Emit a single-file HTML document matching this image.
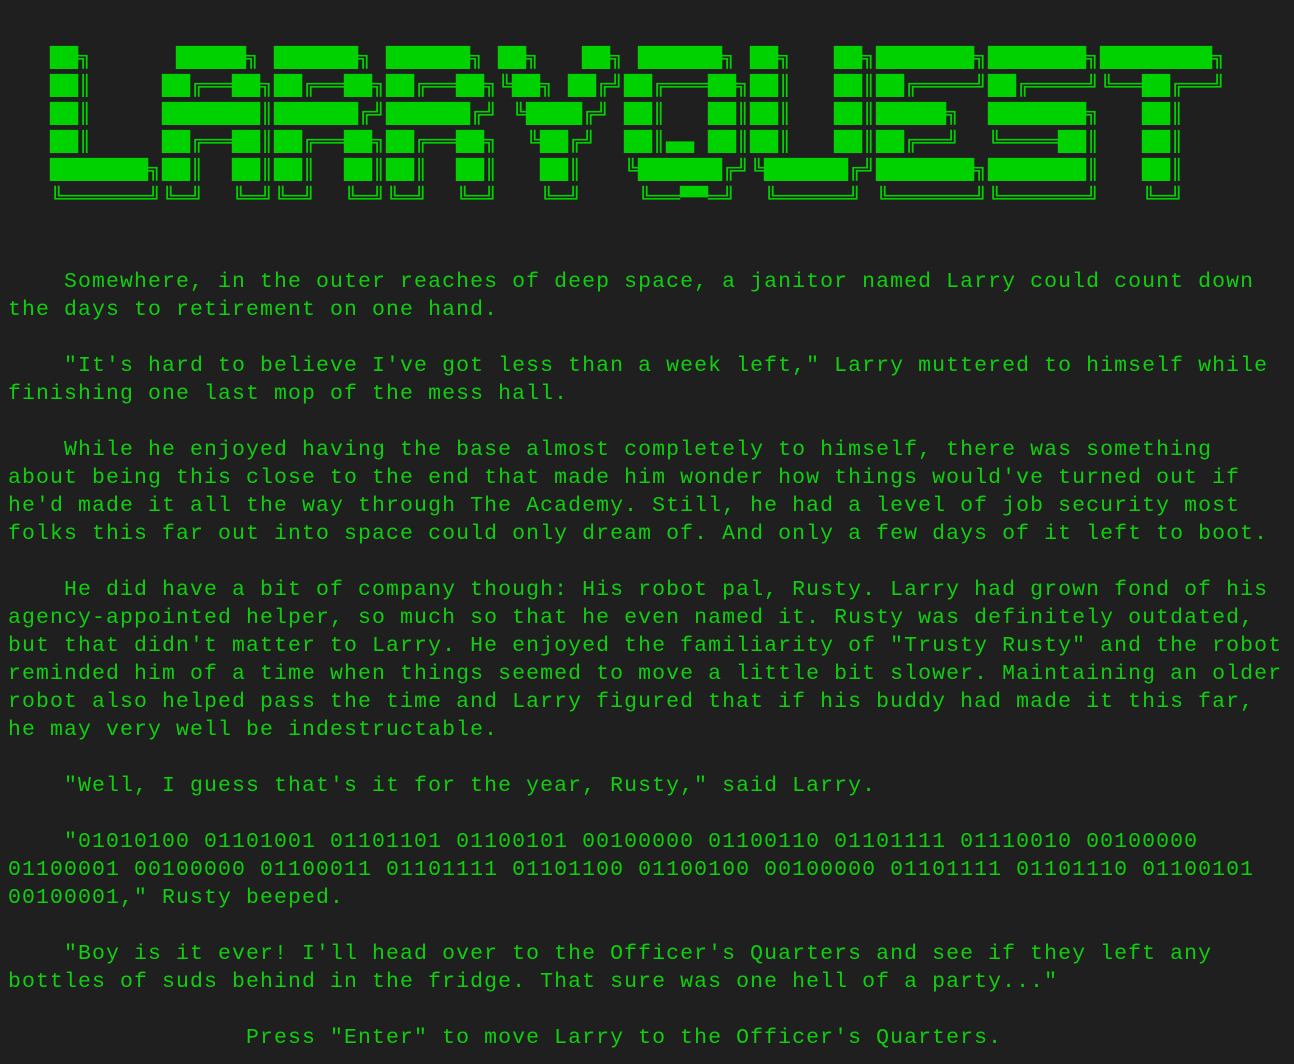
<!DOCTYPE html>
<html><head><meta charset="utf-8"><style>
html,body{margin:0;padding:0;background:#1f1f1f;width:1294px;height:1064px;overflow:hidden}
pre{margin:0;position:absolute;left:8px;white-space:pre;color:#0fcf0f}
#art{top:44px;font-family:"DejaVu Sans Mono",monospace;font-size:19.5px;letter-spacing:0px;line-height:28px;color:#00d200;transform:scaleX(1.1925);transform-origin:0 0}
#txt{top:268px;font-family:"Liberation Mono",monospace;font-size:21.5px;letter-spacing:1.1px;line-height:28px}
</style></head><body>
<pre id="art">   ██╗      █████╗ ██████╗ ██████╗ ██╗   ██╗ ██████╗ ██╗   ██╗███████╗███████╗████████╗
   ██║     ██╔══██╗██╔══██╗██╔══██╗╚██╗ ██╔╝██╔═══██╗██║   ██║██╔════╝██╔════╝╚══██╔══╝
   ██║     ███████║██████╔╝██████╔╝ ╚████╔╝ ██║   ██║██║   ██║█████╗  ███████╗   ██║   
   ██║     ██╔══██║██╔══██╗██╔══██╗  ╚██╔╝  ██║▄▄ ██║██║   ██║██╔══╝  ╚════██║   ██║   
   ███████╗██║  ██║██║  ██║██║  ██║   ██║   ╚██████╔╝╚██████╔╝███████╗███████║   ██║   
   ╚══════╝╚═╝  ╚═╝╚═╝  ╚═╝╚═╝  ╚═╝   ╚═╝    ╚══▀▀═╝  ╚═════╝ ╚══════╝╚══════╝   ╚═╝   </pre>
<pre id="txt">    Somewhere, in the outer reaches of deep space, a janitor named Larry could count down
the days to retirement on one hand.

    "It's hard to believe I've got less than a week left," Larry muttered to himself while
finishing one last mop of the mess hall.

    While he enjoyed having the base almost completely to himself, there was something
about being this close to the end that made him wonder how things would've turned out if
he'd made it all the way through The Academy. Still, he had a level of job security most
folks this far out into space could only dream of. And only a few days of it left to boot.

    He did have a bit of company though: His robot pal, Rusty. Larry had grown fond of his
agency-appointed helper, so much so that he even named it. Rusty was definitely outdated,
but that didn't matter to Larry. He enjoyed the familiarity of "Trusty Rusty" and the robot
reminded him of a time when things seemed to move a little bit slower. Maintaining an older
robot also helped pass the time and Larry figured that if his buddy had made it this far,
he may very well be indestructable.

    "Well, I guess that's it for the year, Rusty," said Larry.

    "01010100 01101001 01101101 01100101 00100000 01100110 01101111 01110010 00100000
01100001 00100000 01100011 01101111 01101100 01100100 00100000 01101111 01101110 01100101
00100001," Rusty beeped.

    "Boy is it ever! I'll head over to the Officer's Quarters and see if they left any
bottles of suds behind in the fridge. That sure was one hell of a party..."

                 Press "Enter" to move Larry to the Officer's Quarters.</pre>
</body></html>
